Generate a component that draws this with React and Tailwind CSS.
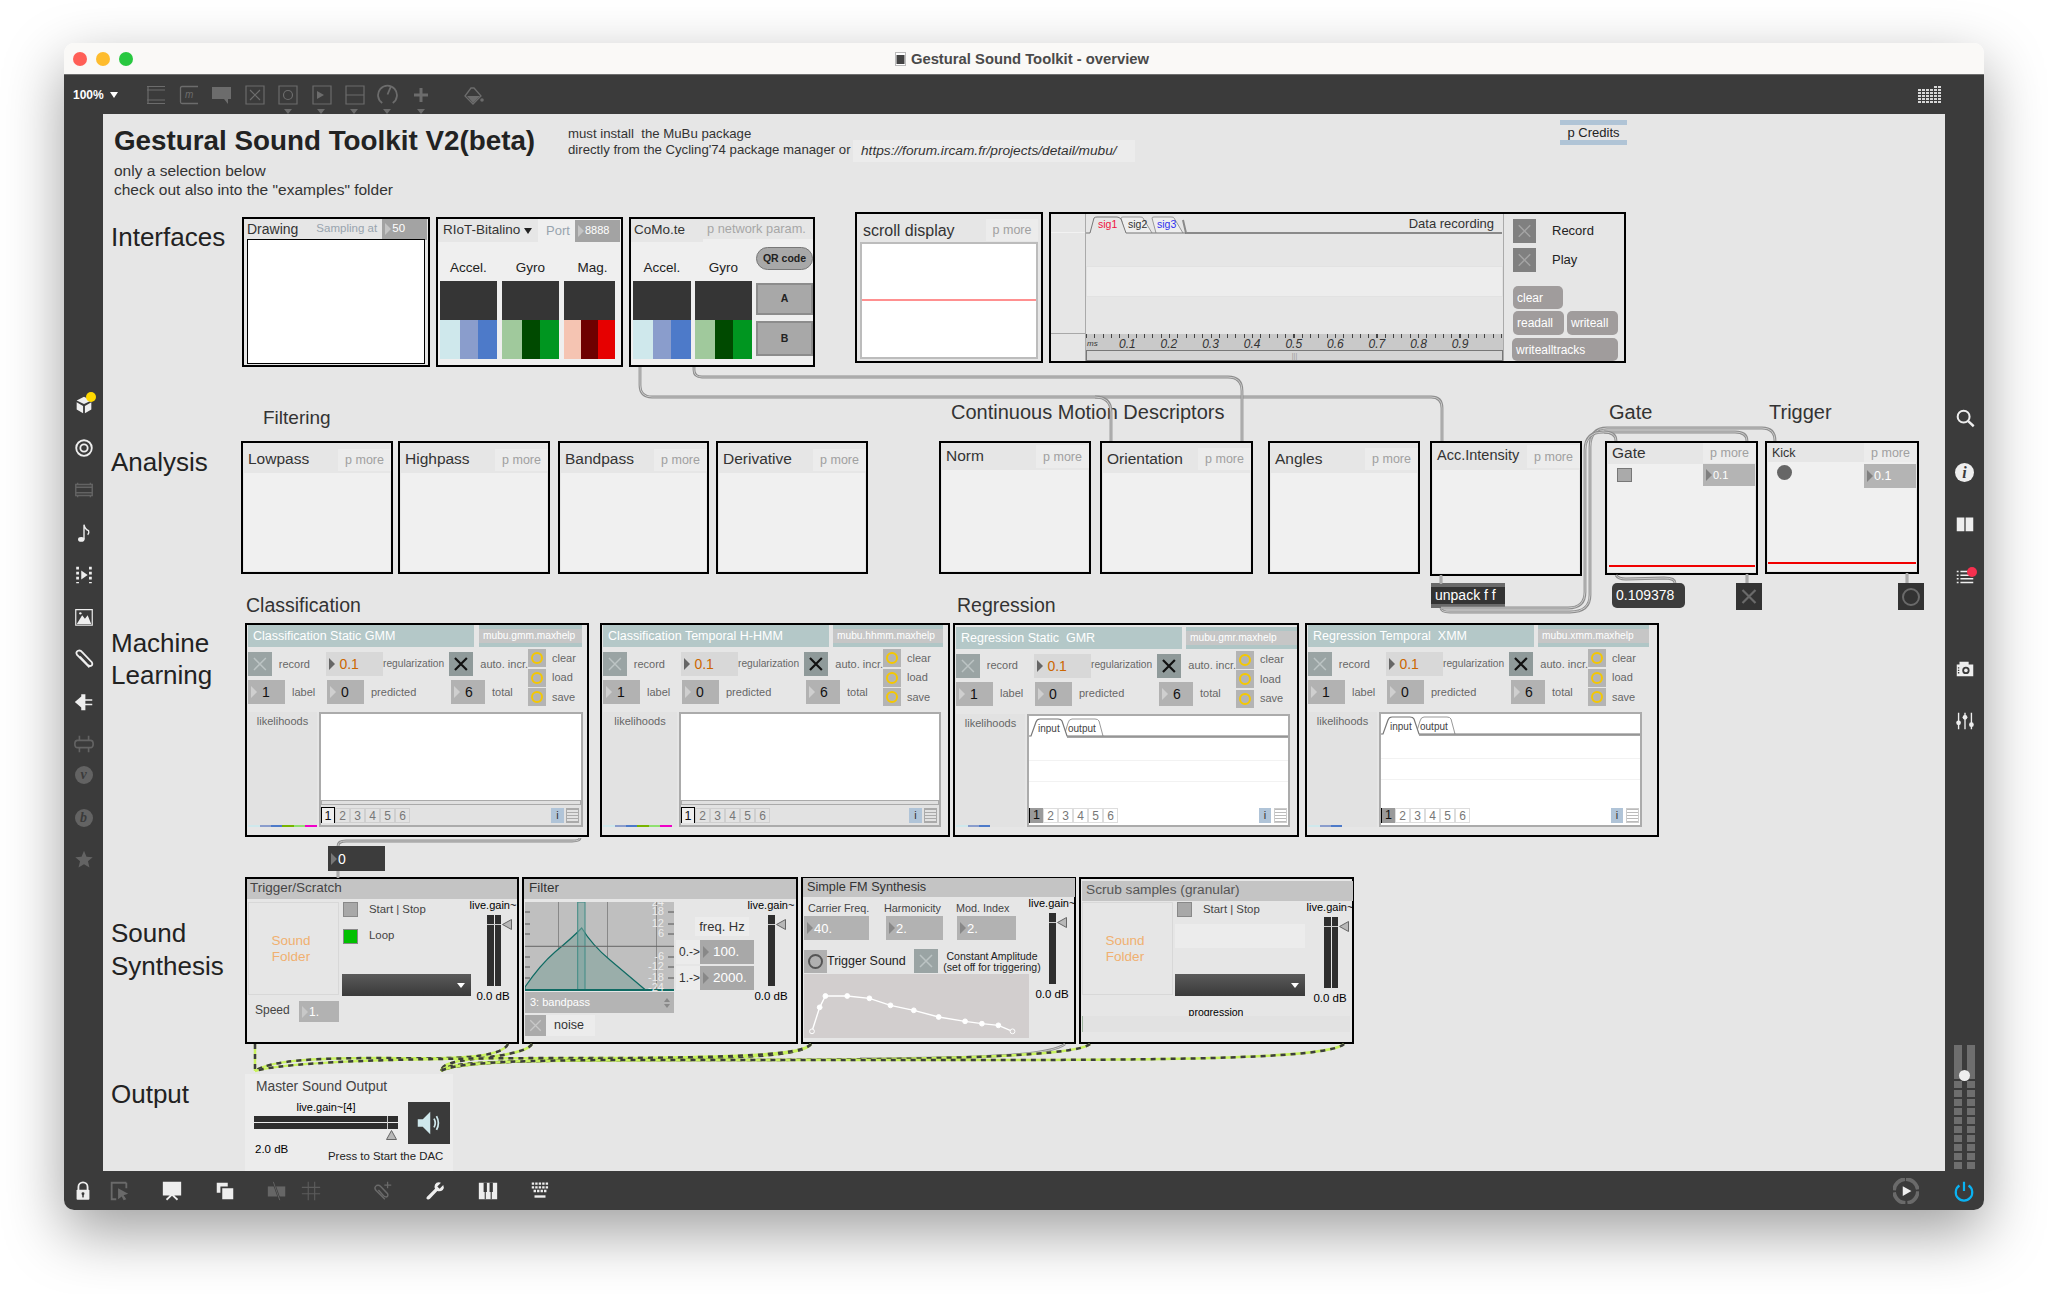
import React from "react";

const Svg = ({ size = 22, className = "", children, box = "0 0 24 24" }) => (
  <svg width={size} height={size} viewBox={box} className={className}>
    {children}
  </svg>
);

// patch objects sit on the free canvas, coordinates are screen pixels
const Node = ({ x, y, w, h, className = "", children }) => (
  <div
    className={"absolute " + className}
    style={{ left: x - 103, top: y - 114, width: w, height: h }}
  >
    {children}
  </div>
);

const Label = ({ x, y, className = "", children }) => (
  <div
    className={"absolute whitespace-nowrap leading-none -translate-y-1/2 " + className}
    style={{ left: x - 103, top: y - 114 }}
  >
    {children}
  </div>
);

const Centered = ({ x, y, className = "", children }) => (
  <div
    className={"absolute whitespace-nowrap leading-none -translate-x-1/2 -translate-y-1/2 " + className}
    style={{ left: x - 103, top: y - 114 }}
  >
    {children}
  </div>
);

const Tri = ({ className = "border-l-[#8a8a8a]" }) => (
  <span className={"shrink-0 border-y-[6px] border-l-[6px] border-y-transparent " + className} />
);

const NumBox = ({ value, className = "", bg = "bg-[#b2b2b2]", text = "text-white", tri, size = "text-[13px]" }) => (
  <div className={"flex items-center pl-[3px] gap-[1px] " + bg + " " + className}>
    <Tri className={tri} />
    <span className={"leading-none " + text + " " + size}>{value}</span>
  </div>
);

const XBox = ({ className = "", bg = "bg-[#9aa4a4]", stroke = "#bcc4c4", sw = 1.5 }) => (
  <div className={"flex items-center justify-center " + bg + " " + className}>
    <svg viewBox="0 0 24 24" className="w-full h-full">
      <path d="M6 6L18 18M18 6L6 18" stroke={stroke} strokeWidth={sw} fill="none" />
    </svg>
  </div>
);

const PMore = ({ className = "" }) => (
  <div className={"absolute flex items-center justify-center bg-[#ececec] text-[#a0a0a0] text-[12.5px] " + className}>
    p more
  </div>
);

const Panel = ({ className = "", ...rest }) => (
  <Node className={"border-2 border-black " + className} {...rest} />
);

/* ---------- chrome ---------- */

const TitleBar = () => (
  <div className="h-[32px] shrink-0 bg-[#faf9f7] border-b border-[#6e6e6e] grid grid-cols-[1fr_auto_1fr] items-center">
    <div className="flex items-center gap-[9px] pl-[9px]">
      <span className="w-[14px] h-[14px] rounded-full bg-[#ff5f57]" />
      <span className="w-[14px] h-[14px] rounded-full bg-[#febc2e]" />
      <span className="w-[14px] h-[14px] rounded-full bg-[#28c840]" />
    </div>
    <div className="flex items-center gap-[5px] pr-[4px] pt-[2px]">
      <svg width="11" height="14" viewBox="0 0 11 14">
        <rect x="0.5" y="0.5" width="10" height="13" fill="#fff" stroke="#bbb" />
        <rect x="1.5" y="3" width="8" height="9" fill="#444" />
      </svg>
      <span className="text-[14.8px] font-bold text-[#4a4a4a] leading-none">Gestural Sound Toolkit - overview</span>
    </div>
    <div />
  </div>
);

const ToolSlot = ({ children, arrow }) => (
  <div className="relative w-[33.2px] h-[24px] flex items-center justify-center text-[#6c6c6c]">
    {children}
    {arrow && (
      <span className="absolute top-[26px] left-[12px] border-x-[4px] border-t-[5px] border-x-transparent border-t-[#6c6c6c]" />
    )}
  </div>
);

const TopToolbar = () => (
  <div className="h-[39px] shrink-0 bg-[#3b3b3b] flex items-center pl-[9px]">
    <div className="w-[66px] flex items-center gap-[6px] text-white text-[12px] font-bold">
      100%
      <span className="border-x-[4px] border-t-[6px] border-x-transparent border-t-white" />
    </div>
    <ToolSlot>
      <Svg size={20} box="0 0 20 20">
        <path d="M1 1.5H19M1 5H19M1 15H19M1 18.5H19M2 1V19" stroke="currentColor" strokeWidth="1.2" fill="none" />
      </Svg>
    </ToolSlot>
    <ToolSlot>
      <Svg size={20} box="0 0 20 20">
        <path d="M19 1.5H3Q1.5 1.5 1.5 3V17Q1.5 18.5 3 18.5H19" stroke="currentColor" strokeWidth="1.3" fill="none" />
        <text x="6" y="13" fontSize="10" fontStyle="italic" fill="currentColor">m</text>
      </Svg>
    </ToolSlot>
    <ToolSlot>
      <Svg size={20} box="0 0 20 20">
        <path d="M0 2H19V14H16V19L12 14H0Z" fill="currentColor" />
      </Svg>
    </ToolSlot>
    <ToolSlot>
      <Svg size={20} box="0 0 20 20">
        <path d="M1 1H19V19H1ZM5 5L15 15M15 5L5 15" stroke="currentColor" strokeWidth="1.2" fill="none" />
      </Svg>
    </ToolSlot>
    <ToolSlot arrow>
      <Svg size={20} box="0 0 20 20">
        <path d="M1 1H19V19H1Z" stroke="currentColor" strokeWidth="1.2" fill="none" />
        <circle cx="10" cy="10" r="4.5" stroke="currentColor" strokeWidth="1.2" fill="none" />
      </Svg>
    </ToolSlot>
    <ToolSlot arrow>
      <Svg size={20} box="0 0 20 20">
        <path d="M1 1H19V19H1Z" stroke="currentColor" strokeWidth="1.2" fill="none" />
        <path d="M5 6L12 10L5 14Z" fill="currentColor" />
      </Svg>
    </ToolSlot>
    <ToolSlot arrow>
      <Svg size={20} box="0 0 20 20">
        <path d="M1 1H19V19H1ZM1 10H19" stroke="currentColor" strokeWidth="1.2" fill="none" />
      </Svg>
    </ToolSlot>
    <ToolSlot arrow>
      <Svg size={21} box="0 0 20 20">
        <path d="M5 18A9 9 0 1 1 15 18M10 10L13 3" stroke="currentColor" strokeWidth="1.7" fill="none" />
      </Svg>
    </ToolSlot>
    <ToolSlot arrow>
      <Svg size={16} box="0 0 16 16">
        <path d="M8 1V15M1 8H15" stroke="currentColor" strokeWidth="3" fill="none" />
      </Svg>
    </ToolSlot>
    <div className="w-[20px]" />
    <ToolSlot>
      <Svg size={20} box="0 0 20 20">
        <path d="M7 3L1 11L9 19L17 11L10 3Z" fill="none" stroke="currentColor" strokeWidth="1.3" />
        <path d="M3 11H16L9 18Z" fill="currentColor" />
        <circle cx="18" cy="15" r="1.8" fill="currentColor" />
      </Svg>
    </ToolSlot>
    <div className="ml-auto mr-[43px] grid grid-cols-6 gap-[1px]">
      {Array.from({ length: 36 }).map((_, i) => (
        <span key={i} className={"w-[3px] h-[2px] " + (i < 4 ? "bg-transparent" : "bg-[#d8d8d8]")} />
      ))}
    </div>
  </div>
);

const LeftSidebar = () => (
  <div className="w-[39px] shrink-0 bg-[#3b3b3b] flex flex-col items-center">
    <div className="relative mt-[280px] h-[24px] text-[#eeeeee]">
      <Svg>
        <path d="M12 3L20 7L12 11L4 7ZM4 9L11 13V21L4 17ZM20 9L13 13V21L20 17Z" fill="currentColor" />
      </Svg>
      <span className="absolute -top-[2px] left-[13px] w-[10px] h-[10px] rounded-full bg-[#ffd900]" />
    </div>
    <div className="mt-[19px] h-[24px] text-[#eeeeee]">
      <Svg>
        <circle cx="12" cy="12" r="8.5" stroke="currentColor" strokeWidth="2" fill="none" />
        <circle cx="12" cy="12" r="4" stroke="currentColor" strokeWidth="2" fill="none" />
      </Svg>
    </div>
    <div className="mt-[18px] h-[24px] text-[#636363]">
      <Svg>
        <path d="M3 6H21V18H3ZM5 4V6M19 4V6M5 18V20M19 18V20M3 9H21M3 15H21" stroke="currentColor" strokeWidth="1.6" fill="none" />
      </Svg>
    </div>
    <div className="mt-[19px] h-[24px] text-[#eeeeee]">
      <Svg>
        <ellipse cx="9" cy="19" rx="3.5" ry="2.6" fill="currentColor" />
        <path d="M12 19V3Q13 8 17 9.5Q18 12 16 14" stroke="currentColor" strokeWidth="1.5" fill="none" />
      </Svg>
    </div>
    <div className="mt-[18px] h-[24px] text-[#eeeeee]">
      <Svg>
        <path d="M5 3V21M19 3V21" stroke="currentColor" strokeWidth="3" strokeDasharray="3 2.5" fill="none" />
        <path d="M9 7L16 12L9 17Z" fill="currentColor" />
      </Svg>
    </div>
    <div className="mt-[18px] h-[24px] text-[#eeeeee]">
      <Svg>
        <path d="M3 4H21V21H3Z" stroke="currentColor" strokeWidth="1.3" fill="none" />
        <path d="M4 20L10 10L13 14L16 10L20 20Z" fill="currentColor" />
        <circle cx="8" cy="8" r="1.3" fill="currentColor" />
      </Svg>
    </div>
    <div className="mt-[18px] h-[24px] text-[#eeeeee]">
      <Svg>
        <path d="M18 21L4.5 7.5Q2.5 4.5 5.5 3Q8 2 10 4.5L20.5 15.5Q22 18.5 19.5 19.5Q17.5 20 15.5 18L7.5 9.5" stroke="currentColor" strokeWidth="2" fill="none" />
      </Svg>
    </div>
    <div className="mt-[19px] h-[24px] text-[#eeeeee]">
      <Svg>
        <path d="M2 12L9 6V3.5H13.5V9H21V10.5H13.5V14H21V15.5H13.5V21H9V18Z" fill="currentColor" />
      </Svg>
    </div>
    <div className="mt-[18px] h-[24px] text-[#636363]">
      <Svg>
        <path d="M5 8H19Q22 8 22 12Q22 16 19 16H5Q2 16 2 12Q2 8 5 8ZM7 3V8M17 3V8M7 16V21M17 16V21" stroke="currentColor" strokeWidth="1.8" fill="none" />
      </Svg>
    </div>
    <div className="mt-[9px] w-[18px] h-[18px] mb-[3px] rounded-full bg-[#636363] flex items-center justify-center text-[#3b3b3b] text-[14px] italic font-['Liberation_Serif',serif] font-bold leading-none">
      v
    </div>
    <div className="mt-[22px] w-[18px] h-[18px] rounded-full bg-[#636363] flex items-center justify-center text-[#3b3b3b] text-[14px] italic font-['Liberation_Serif',serif] font-bold leading-none">
      b
    </div>
    <div className="mt-[21px] h-[24px] text-[#636363]">
      <Svg>
        <path d="M12 3L14.7 9.5L21.5 10L16.3 14.5L18 21.3L12 17.6L6 21.3L7.7 14.5L2.5 10L9.3 9.5Z" fill="currentColor" />
      </Svg>
    </div>
  </div>
);

const RightSidebar = () => (
  <div className="w-[39px] shrink-0 bg-[#3b3b3b] flex flex-col items-center text-[#eeeeee]">
    <div className="mt-[293px] h-[24px]">
      <Svg>
        <circle cx="10.5" cy="10.5" r="6.5" stroke="currentColor" strokeWidth="2.2" fill="none" />
        <path d="M15.5 15.5L21.5 21" stroke="currentColor" strokeWidth="2.6" fill="none" />
      </Svg>
    </div>
    <div className="mt-[32px] w-[19px] h-[19px] mb-[5px] rounded-full bg-[#eeeeee] flex items-center justify-center text-[#3b3b3b] text-[16px] italic font-bold font-['Liberation_Serif',serif] leading-none">
      i
    </div>
    <div className="mt-[26px] h-[24px]">
      <Svg>
        <path d="M3 5H11.3V20H3ZM12.7 5H21V20H12.7Z" fill="currentColor" />
      </Svg>
    </div>
    <div className="relative mt-[29px] h-[24px]">
      <Svg>
        <path d="M7 6H16M7 10H21M7 14H21M7 18H21M3 6H5M3 10H5M3 14H5M3 18H5" stroke="currentColor" strokeWidth="1.6" fill="none" />
      </Svg>
      <span className="absolute top-[1px] left-[13px] w-[10px] h-[10px] rounded-full bg-[#f5304f]" />
    </div>
    <div className="mt-[68px] h-[24px]">
      <Svg>
        <path d="M3 7H6V4H16V7H21V20H3Z" fill="currentColor" />
        <circle cx="13" cy="13.5" r="4" fill="#3b3b3b" />
        <circle cx="13" cy="13.5" r="2" fill="#eeeeee" />
        <path d="M5 10V18" stroke="#3b3b3b" strokeWidth="1.5" strokeDasharray="1.5 1.2" />
      </Svg>
    </div>
    <div className="mt-[28px] h-[24px]">
      <Svg>
        <path d="M5 3V21M12 3V21M19 3V21" stroke="currentColor" strokeWidth="1.5" />
        <circle cx="5" cy="14" r="2.6" fill="currentColor" />
        <circle cx="12" cy="8" r="2.6" fill="currentColor" />
        <circle cx="19" cy="16" r="2.6" fill="currentColor" />
      </Svg>
    </div>
    <div className="relative mt-auto mb-[2px] flex gap-[5px] h-[124px]">
      <div className="w-[8px] flex flex-col">
        <div className="h-[27px] bg-[#6e6e6e]" />
        <div className="flex-1 bg-[repeating-linear-gradient(to_bottom,#6e6e6e_0,#6e6e6e_7px,#3b3b3b_7px,#3b3b3b_9px)]" />
      </div>
      <div className="w-[8px] flex flex-col">
        <div className="h-[27px] bg-[#6e6e6e]" />
        <div className="flex-1 bg-[repeating-linear-gradient(to_bottom,#6e6e6e_0,#6e6e6e_7px,#3b3b3b_7px,#3b3b3b_9px)]" />
      </div>
      <span className="absolute top-[25px] left-[5px] w-[11px] h-[11px] rounded-full bg-[#eeeeee]" />
    </div>
  </div>
);

const BottomToolbar = () => (
  <div className="h-[39px] shrink-0 bg-[#3b3b3b] flex items-center text-[#eeeeee]">
    <div className="ml-[8px]">
      <Svg>
        <path d="M7 11V7.5A5 5 0 0 1 17 7.5V11" stroke="currentColor" strokeWidth="2" fill="none" />
        <rect x="5" y="10.5" width="14" height="11" rx="1" fill="currentColor" />
        <circle cx="12" cy="15" r="1.6" fill="#3b3b3b" />
        <rect x="11.2" y="15" width="1.6" height="4" fill="#3b3b3b" />
      </Svg>
    </div>
    <div className="ml-[14px] text-[#6a6a6a]">
      <Svg>
        <path d="M20 3H4V21H9M20 3V9" stroke="currentColor" strokeWidth="2" fill="none" />
        <path d="M11 9L22 15L17 16.5L20 21L17 22L15 18L11 21Z" fill="currentColor" />
      </Svg>
    </div>
    <div className="ml-[31px]">
      <Svg>
        <path d="M3 3H21V16H3ZM12 16L6 21.5M12 16L18 21.5" stroke="currentColor" strokeWidth="2" fill="currentColor" />
      </Svg>
    </div>
    <div className="ml-[31px]">
      <Svg>
        <path d="M3 3H15V7H7V14H3ZM9 9H21V21H9Z" fill="currentColor" />
      </Svg>
    </div>
    <div className="ml-[30px] text-[#666666]">
      <Svg>
        <path d="M2 7H21V18H2Z" fill="currentColor" />
        <path d="M8 2L15 22" stroke="#3b3b3b" strokeWidth="2.4" />
        <path d="M8 2L15 22" stroke="currentColor" strokeWidth="1" />
      </Svg>
    </div>
    <div className="ml-[12px] text-[#5c5c5c]">
      <Svg>
        <path d="M9 2V22M16 2V22M2 8H22M2 15H22" stroke="currentColor" strokeWidth="1.2" fill="none" />
      </Svg>
    </div>
    <div className="ml-[50px] text-[#6a6a6a]">
      <Svg>
        <path d="M14 21L4 11Q2 8 5 6Q7.5 5 9.5 7L17 15Q18 18 15.5 18.5Q13.5 18.5 12 16.5L7 11" stroke="currentColor" strokeWidth="1.6" fill="none" />
        <path d="M17 2V9M13.5 5.5H21" stroke="currentColor" strokeWidth="1.4" />
      </Svg>
    </div>
    <div className="ml-[30px]">
      <Svg>
        <path d="M21 5.5L17 9.5L14.5 7L18.5 3Q14 1.5 12 5Q11 7.5 12 9.5L3 18.5Q2 20.5 3.5 21Q5 22 6.5 20.5L14.5 12Q18 13 20.5 11Q22.5 8.5 21 5.5Z" fill="currentColor" />
      </Svg>
    </div>
    <div className="ml-[30.5px]">
      <Svg>
        <path d="M2 3H22V21H2Z" fill="currentColor" />
        <path d="M9 3V21M15.5 3V21" stroke="#3b3b3b" strokeWidth="1.2" />
        <path d="M7.2 3V13H10.8V3M13.7 3V13H17.3V3" fill="#3b3b3b" />
      </Svg>
    </div>
    <div className="ml-[30.5px]">
      <Svg>
        <path d="M3 4H21M3 8H21M5 12H19" stroke="currentColor" strokeWidth="2.6" strokeDasharray="2.6 1.2" fill="none" />
        <path d="M6 18H18" stroke="currentColor" strokeWidth="2.6" />
      </Svg>
    </div>
    <div className="ml-auto text-[#6a6a6a]">
      <Svg size={26}>
        <path d="M12 1A11 11 0 1 1 11.9 1" stroke="currentColor" strokeWidth="3.4" fill="none" strokeDasharray="15.5 1.8" />
        <path d="M9 7.5L17 12L9 16.5Z" fill="#eeeeee" />
      </Svg>
    </div>
    <div className="ml-[34px] mr-[9px] text-[#0ab2f2]">
      <Svg>
        <path d="M7 6A9 9 0 1 0 17 6M12 2V12" stroke="currentColor" strokeWidth="2.4" fill="none" />
      </Svg>
    </div>
  </div>
);

/* ---------- patch cords ---------- */

const Cord = ({ d }) => (
  <>
    <path d={d} fill="none" stroke="#8e8e8e" strokeWidth="2.8" />
    <path d={d} fill="none" stroke="#c9c9c9" strokeWidth="1" />
  </>
);

const Signal = ({ d }) => (
  <>
    <path d={d} fill="none" stroke="#c9f25f" strokeWidth="2.5" />
    <path d={d} fill="none" stroke="#3d3d3d" strokeWidth="2.5" strokeDasharray="5 5" />
  </>
);

const Cords = () => (
  <svg
    className="absolute left-0 top-0 z-20 pointer-events-none"
    width="1842"
    height="1057"
    viewBox="103 114 1842 1057"
  >
    <Cord d="M640 367L640 385Q640 397 652 397L1431 397Q1442 397 1442 408L1442 441" />
    <Cord d="M1095 397Q1111 397 1111 412L1111 441" />
    <Cord d="M694 367L694 370Q694 377 702 377L1228 377Q1242 377 1242 391L1242 441" />
    <Cord d="M1441 575L1441 584" />
    <Cord d="M1441 608Q1441 612 1450 612L1570 612Q1590 612 1590 595L1590 447Q1590 428 1607 428L1762 428Q1775 428 1775 441" />
    <Cord d="M1441 608L1568 608Q1585 608 1585 592L1585 450Q1585 432 1603 432L1735 432Q1747 432 1747 441" />
    <Cord d="M1604 432Q1616 432 1616 441" />
    <Cord d="M1616 575Q1618 579 1626 579L1664 578Q1675 578 1675 583" />
    <Cord d="M1747 574L1747 583" />
    <Cord d="M1907 573L1907 583" />
    <Cord d="M580 838Q580 841 572 841L346 841Q338 841 338 846" />
    <Cord d="M338 871L338 878" />
    <Cord d="M1065 1044C1050 1056 980 1058 860 1059" />
    <Signal d="M255 1044L255 1071" />
    <Signal d="M508 1044C500 1062 420 1058 380 1058C320 1058 270 1060 255 1071" />
    <Signal d="M532 1044C525 1056 470 1058 455 1062C447 1064 442 1066 441 1071" />
    <Signal d="M811 1044C800 1060 700 1058 600 1058C500 1058 300 1058 255 1071" />
    <Signal d="M811 1044C800 1060 660 1056 560 1060C500 1062 445 1062 441 1071" />
    <Signal d="M1090 1044C1075 1058 900 1060 720 1060C560 1060 460 1060 441 1071" />
    <Signal d="M1344 1044C1325 1062 1100 1060 800 1060C600 1060 460 1058 441 1071" />
  </svg>
);

/* ---------- interfaces ---------- */

const ACCEL = ["bg-[#cfe8ec] w-[20px]", "bg-[#8a9dcc] w-[18px]", "bg-[#4d7ac9] flex-1"];
const GYRO = ["bg-[#a0c99c] w-[20px]", "bg-[#004a00] w-[18px]", "bg-[#009620] flex-1"];
const MAG = ["bg-[#f5c4b2] w-[17px]", "bg-[#6e0000] w-[17px]", "bg-[#e60000] flex-1"];

const Sensor = ({ label, stripes, className = "", labelPad = "" }) => (
  <div className={"flex flex-col " + className}>
    <div className={"h-[39px] pt-[14px] flex items-center justify-center text-[13.5px] text-[#222] " + labelPad}>{label}</div>
    <div className="h-[39px] bg-[#353535]" />
    <div className="h-[39px] flex">
      {stripes.map((s) => (
        <div key={s} className={s} />
      ))}
    </div>
  </div>
);

const Interfaces = () => (
  <>
    <Panel x={242} y={217} w={188} h={150} className="flex flex-col">
      <div className="h-[20px] flex items-center pl-[3px] text-[14px] text-[#333]">
        Drawing
        <span className="ml-[18px] text-[11.5px] text-[#98a4ae] w-[66px]">Sampling at</span>
        <NumBox value="50" className="w-[45px] h-[21px]" bg="bg-[#a3a3a3]" tri="border-l-[#c4c4c4]" size="text-[11.5px]" />
      </div>
      <div className="mx-[3px] mb-[1px] flex-1 bg-white border border-black" />
    </Panel>

    <Panel x={436} y={217} w={187} h={150} className="bg-[#efefef] flex flex-col">
      <div className="h-[23px] flex items-center">
        <div className="w-[100px] h-full bg-[#e6e6e6] flex items-center gap-[4px] pl-[5px] text-[13.5px] text-[#333]">
          RIoT-Bitalino
          <span className="border-x-[4px] border-t-[6px] border-x-transparent border-t-[#222]" />
        </div>
        <span className="ml-[8px] w-[29px] text-[13px] text-[#98a4ae]">Port</span>
        <NumBox value="8888" className="w-[45px] h-[22px]" bg="bg-[#a3a3a3]" tri="border-l-[#c4c4c4]" size="text-[11px]" />
      </div>
      <div className="flex gap-[5px] pl-[2px]">
        <Sensor label="Accel." stripes={ACCEL} className="w-[57px]" />
        <Sensor label="Gyro" stripes={GYRO} className="w-[57px]" />
        <Sensor label="Mag." stripes={MAG} className="w-[51px]" labelPad="pl-[6px]" />
      </div>
    </Panel>

    <Panel x={629} y={217} w={186} h={150} className="bg-[#efefef] flex flex-col">
      <div className="h-[23px] flex items-start">
        <div className="w-[72px] h-full bg-[#e6e6e6] flex items-center pl-[3px] text-[13.5px] text-[#333]">CoMo.te</div>
        <div className="flex-1 h-[20px] bg-[#e6e6e6] flex items-center pl-[4px] text-[12.8px] whitespace-nowrap text-[#a6a6a6]">p network param.</div>
      </div>
      <div className="flex pl-[2px] gap-[4px]">
        <div className="flex gap-[4px]">
          <Sensor label="Accel." stripes={ACCEL} className="w-[58px]" />
          <Sensor label="Gyro" stripes={GYRO} className="w-[57px]" />
        </div>
        <div className="w-[57px] flex flex-col mt-[5px]">
          <div className="h-[23px] rounded-full bg-[#a8a8a8] border border-[#777] flex items-center justify-center text-[10.5px] font-bold text-[#222]">QR code</div>
          <div className="mt-[13px] h-[32px] bg-[#a8a8a8] border-2 border-[#8c8c8c] flex items-center justify-center text-[10.5px] font-bold text-[#222]">A</div>
          <div className="mt-[6px] h-[35px] bg-[#a8a8a8] border-2 border-[#8c8c8c] flex items-center justify-center text-[10.5px] font-bold text-[#222]">B</div>
        </div>
      </div>
    </Panel>

    <Panel x={855} y={212} w={188} h={151} className="flex flex-col">
      <div className="relative h-[28px] flex items-center pl-[6px] pt-[5px] text-[16px] text-[#333]">
        scroll display
        <PMore className="top-[5px] right-[3px] w-[52px] h-[22px]" />
      </div>
      <div className="relative mx-[3px] mb-[2px] flex-1 bg-white border-2 border-[#bcbcbc]">
        <div className="absolute left-0 right-0 top-[55px] h-[2px] bg-[#ff9090]" />
      </div>
    </Panel>

    <Panel x={1049} y={212} w={577} h={151} className="flex">
      <div className="w-[35px] shrink-0 flex flex-col border-r border-[#aaaaaa]">
        <div className="h-[19px] border-b border-[#f2f2f2]" />
        <div className="flex-1 border-b border-[#a8a8a8]" />
        <div className="h-[27px]" />
      </div>
      <div className="relative w-[418px] shrink-0 flex flex-col border-r border-[#aaaaaa]">
        <svg width="418" height="21" className="shrink-0 text-[#222]" viewBox="0 0 418 21">
          <path d="M97 6L100 19H416" fill="none" stroke="#8a8a8a" strokeWidth="2" />
          <path d="M70 19L66 4Q66 3 68 3H85Q88 3 88 4L97 19" fill="#eeeeee" stroke="#999" />
          <path d="M39 19L35 4Q35 3 37 3H54Q57 3 57 4L66 19" fill="#eeeeee" stroke="#999" />
          <path d="M0 19H4L8 4Q9 3 11 3H31Q33 3 35 5L40 19H100" fill="#e6e6e6" stroke="#777" />
          <text x="12" y="14" fontSize="10.5" fill="#f01040">sig1</text>
          <text x="42" y="14" fontSize="10.5" fill="#333">sig2</text>
          <text x="71" y="14" fontSize="10.5" fill="#3030f0">sig3</text>
          <text x="408" y="14" fontSize="13" textAnchor="end" fill="#333">Data recording</text>
        </svg>
        <div className="mt-[31px] h-[31px] bg-[#ededed] border border-[#e2e2e2]" />
        <div className="mt-auto h-[27px] bg-[#c9c9c9] flex flex-col">
          <div className="h-[4px] bg-[repeating-linear-gradient(to_right,#444_0,#444_1px,transparent_1px,transparent_8.3px)]" />
          <div className="h-[12px] flex items-center text-[12px] italic text-[#333] leading-none">
            <span className="w-[33px] pl-[1px] text-[8px]">ms</span>
            <div className="flex gap-[24px]">
              {["0.1", "0.2", "0.3", "0.4", "0.5", "0.6", "0.7", "0.8", "0.9"].map((n) => (
                <span key={n} className="w-[17.6px]">{n}</span>
              ))}
            </div>
          </div>
          <div className="flex-1 mx-0 bg-[#d4d4d4] border border-[#777] flex items-center justify-center text-[#999] text-[7px] leading-none">|||</div>
        </div>
      </div>
      <div className="flex-1 pl-[9px] flex flex-col">
        <div className="mt-[5px] flex items-center">
          <XBox className="w-[23px] h-[24px]" bg="bg-[#808080]" stroke="#a4a4a4" />
          <span className="ml-[16px] text-[13px] text-[#222]">Record</span>
        </div>
        <div className="mt-[5px] flex items-center">
          <XBox className="w-[23px] h-[24px]" bg="bg-[#808080]" stroke="#a4a4a4" />
          <span className="ml-[16px] text-[13px] text-[#222]">Play</span>
        </div>
        <button className="mt-[14px] w-[50px] h-[24px] rounded-[5px] bg-[#a09c9c] text-white text-[12px] text-left pl-[4px]">clear</button>
        <div className="mt-[2px] flex gap-[3px]">
          <button className="w-[51px] h-[24px] rounded-[5px] bg-[#a09c9c] text-white text-[12px] text-left pl-[4px]">readall</button>
          <button className="w-[51px] h-[24px] rounded-[5px] bg-[#a09c9c] text-white text-[12px] text-left pl-[4px]">writeall</button>
        </div>
        <button className="mt-[3px] -ml-[1px] w-[106px] h-[23px] rounded-[5px] bg-[#a09c9c] text-white text-[12px] text-left pl-[4px]">writealltracks</button>
      </div>
    </Panel>
  </>
);

/* ---------- analysis ---------- */

const Analysis = ({ x, w, y = 441, h = 133, title, textDy = "pt-[7px]", bodyTop = 30, size = "text-[15.5px]", pm = "top-[6px] h-[22px]", children }) => (
  <Panel x={x} y={y} w={w} h={h} className="flex flex-col">
    <div className={"relative shrink-0 flex items-start pl-[5px] leading-[18px] text-[#333] " + size + " " + textDy} style={{ height: bodyTop }}>
      {title}
      <PMore className={"right-[0px] w-[53px] " + pm} />
    </div>
    <div className="relative flex-1 mx-[1px] mb-[1px] bg-[#f0f0f0]">{children}</div>
  </Panel>
);

const AnalysisRow = () => (
  <>
    <Analysis x={241} w={152} title="Lowpass" />
    <Analysis x={398} w={152} title="Highpass" />
    <Analysis x={558} w={151} title="Bandpass" />
    <Analysis x={716} w={152} title="Derivative" />
    <Analysis x={939} w={152} title="Norm" textDy="pt-[4px]" bodyTop={27} pm="top-[2px] h-[23px]" />
    <Analysis x={1100} w={153} title="Orientation" pm="top-[5px] h-[22px]" />
    <Analysis x={1268} w={152} title="Angles" pm="top-[5px] h-[22px]" />
    <Analysis x={1430} w={152} h={135} title="Acc.Intensity" textDy="pt-[3px]" bodyTop={27} size="text-[14.5px]" pm="top-[2px] h-[23px]" />
    <Analysis x={1605} w={153} h={134} title="Gate" textDy="pt-[1px]" bodyTop={21} pm="top-[0px] h-[20px]">
      <div className="absolute left-[9px] top-[4px] w-[15px] h-[14px] bg-[#aaaaaa] border border-[#777]" />
      <NumBox value="0.1" className="absolute right-0 top-0 w-[52px] h-[22px]" bg="bg-[#b4b4b4]" tri="border-l-[#808080]" size="text-[11px]" />
      <div className="absolute left-[1px] right-0 bottom-[5px] h-[2.5px] bg-[#f00000]" />
    </Analysis>
    <Analysis x={1765} w={154} h={133} title="Kick" textDy="pt-[1px]" bodyTop={19} size="text-[12.5px]" pm="top-[0px] h-[19px]">
      <div className="absolute left-[9px] top-[3px] w-[15px] h-[15px] rounded-full bg-[#666666]" />
      <NumBox value="0.1" className="absolute right-0 top-[2px] w-[52px] h-[24px]" bg="bg-[#b4b4b4]" tri="border-l-[#808080]" size="text-[12.5px]" />
      <div className="absolute left-0 right-0 bottom-[7px] h-[2.5px] bg-[#f00000]" />
    </Analysis>
  </>
);

/* ---------- machine learning ---------- */

const Ring = ({ label }) => (
  <div className="flex items-center">
    <div className="w-[18px] h-[18px] bg-[#b4b4b4] flex items-center justify-center">
      <span className="w-[12px] h-[12px] rounded-full border-2 border-[#f5c800]" />
    </div>
    <span className="ml-[6px] text-[11px] text-[#666]">{label}</span>
  </div>
);

const Small = ({ className = "", size = "text-[11px]", children }) => (
  <span className={"text-[#666] leading-none whitespace-nowrap " + size + " " + className}>{children}</span>
);

const NUM_TABS = ["2", "3", "4", "5", "6"];

const ClassGraph = () => (
  <div className="flex-1 border-2 border-[#ababab] bg-white flex flex-col">
    <div className="flex-1" />
    <div className="h-[5px] bg-[#e0e0e0] border border-[#aaa]" />
    <div className="h-[20px] bg-[#e2e2e2] flex items-center">
      <span className="w-[14px] h-[16px] bg-[#efefef] border-t border-r border-l border-black text-[12.5px] text-center leading-[16px] text-[#111]">1</span>
      {NUM_TABS.map((n) => (
        <span key={n} className="w-[15px] h-[15px] border border-[#cfcfcf] text-[12px] text-center leading-[15px] text-[#777]">{n}</span>
      ))}
      <span className="ml-auto w-[13px] h-[15px] bg-[#b0c4d8] text-[11px] text-center leading-[15px] text-[#333]">i</span>
      <span className="ml-[2px] mr-[2px] w-[13px] h-[15px] border border-[#aaa] bg-[repeating-linear-gradient(to_bottom,#aaa_0,#aaa_1px,transparent_1px,transparent_3px)]" />
    </div>
  </div>
);

const RegGraph = () => (
  <div className="flex-1 border-2 border-[#ababab] bg-white flex flex-col">
    <svg width="100%" height="22" className="shrink-0" viewBox="0 0 260 22" preserveAspectRatio="xMinYMin slice">
      <path d="M35 20L39 7Q40 3 43 3H66Q69 3 70 5L74 20" fill="#fff" stroke="#999" />
      <path d="M0 20H2L7 6Q8 3 11 3H29Q32 3 33 5L38 20H260" fill="#fff" stroke="#777" strokeWidth="1.2" />
      <path d="M38 21H260" stroke="#888" strokeWidth="1.5" />
      <text x="9" y="16" fontSize="10" fill="#444">input</text>
      <text x="39" y="16" fontSize="10" fill="#444">output</text>
    </svg>
    <div className="mt-[22px] h-[22px] border-y border-[#f2f2f2]" />
    <div className="flex-1" />
    <div className="h-[17px] flex items-center bg-white mb-[1px]">
      <span className="w-[14px] h-[15px] bg-[#9a9a9a] border-l border-black text-[12.5px] text-center leading-[15px] text-[#111]">1</span>
      {NUM_TABS.map((n) => (
        <span key={n} className="w-[15px] h-[15px] border border-[#dddddd] text-[12px] text-center leading-[15px] text-[#777]">{n}</span>
      ))}
      <span className="ml-auto w-[12px] h-[15px] bg-[#b0c4d8] text-[11px] text-center leading-[15px] text-[#333]">i</span>
      <span className="ml-[3px] mr-[1px] w-[13px] h-[15px] border border-[#ccc] bg-[repeating-linear-gradient(to_bottom,#bbb_0,#bbb_1px,transparent_1px,transparent_3px)]" />
    </div>
  </div>
);

const MlPanel = ({ x, w, title, help, helpW = 103, gap = "gap-[5px]", graphW = "w-[335px]", sideW = "w-[69px]", top = "pt-[0px]", regression }) => (
  <Panel x={x} y={623} w={w} h={214} className={"flex flex-col pl-[1px] " + top}>
    <div className={"flex h-[22px] shrink-0 " + gap}>
      <div className="w-[226px] bg-[#b4c8c8] text-white text-[12.5px] leading-[22px] pl-[5px] whitespace-nowrap">{title}</div>
      <div
        className="bg-[#c6c6c6] border-y-[4px] border-[#b0c6c6] text-white text-[10.2px] leading-[14px] pl-[4px] whitespace-nowrap"
        style={{ width: helpW }}
      >
        {help}
      </div>
    </div>

    <div className="flex mt-[2px] shrink-0">
      <div className="w-[280px] pt-[3px] flex flex-col gap-[4px]">
        <div className="flex items-center h-[24px]">
          <XBox className="w-[24px] h-[24px]" />
          <Small className="w-[55px] pl-[7px]">record</Small>
          <NumBox value="0.1" className="w-[57px] h-[24px]" bg="bg-[#d8d8d8]" tri="border-l-[#666]" text="text-[#cc6600] ml-[3px]" size="text-[14px]" />
          <Small className="w-[67px]" size="text-[10.2px]">regularization</Small>
          <XBox className="w-[24px] h-[24px]" bg="bg-[#8f9a9a]" stroke="#111" sw={2.2} />
          <Small className="pl-[7px]">auto. incr.</Small>
        </div>
        <div className="flex items-center h-[24px]">
          <NumBox value="1" className="w-[37px] h-[24px]" tri="border-l-[#cfcfcf]" text="text-[#111] ml-[4px]" size="text-[14px]" />
          <Small className="w-[42px] pl-[7px]">label</Small>
          <NumBox value="0" className="w-[37px] h-[24px]" tri="border-l-[#cfcfcf]" text="text-[#111] ml-[4px]" size="text-[14px]" />
          <Small className="w-[87px] pl-[7px]">predicted</Small>
          <NumBox value="6" className="w-[34px] h-[24px]" tri="border-l-[#cfcfcf]" text="text-[#111] ml-[4px]" size="text-[14px]" />
          <Small className="pl-[7px]">total</Small>
        </div>
      </div>
      <div className="flex flex-col gap-[1.5px]">
        <Ring label="clear" />
        <Ring label="load" />
        <Ring label="save" />
      </div>
    </div>

    <div className={"flex gap-[2px] mt-[6px] mb-[8px] flex-1 " + graphW}>
      <div className={"relative shrink-0 bg-[#e2e2e2] text-center pt-[4px] " + sideW}>
        <Small className="block">likelihoods</Small>
        <div className="absolute left-0 right-0 bottom-0 h-[2px] flex">
          <span className="w-[12px] bg-[#cfe8ec]" />
          <span className="w-[11px] bg-[#8a9dcc]" />
          <span className="w-[11px] bg-[#4d7ac9]" />
          {!regression && <span className="w-[12px] bg-[#78b400]" />}
          {!regression && <span className="w-[11px] bg-[#90e070]" />}
          {!regression && <span className="w-[12px] bg-[#f000c8]" />}
        </div>
      </div>
      {regression ? <RegGraph /> : <ClassGraph />}
    </div>
  </Panel>
);

/* ---------- sound synthesis ---------- */

const LiveGain = ({ x, top, double, left }) => (
  <>
    <Centered x={x} y={top - 10} className="text-[11px] text-black">live.gain~</Centered>
    <Node x={left} y={top} w={double ? 14 : 7} h={71} className="flex gap-[1px]">
      <div className="flex-1 bg-[#2e2e2e]" />
      {double && <div className="flex-1 bg-[#2e2e2e]" />}
    </Node>
    <Node x={left} y={top + 9} w={double ? 14 : 7} h={1} className="bg-[#cccccc]" />
    <Node x={left + (double ? 15 : 8)} y={top + 4} w={10} h={11}>
      <svg width="10" height="11" viewBox="0 0 10 11">
        <path d="M0.5 5.5L9.5 0.5V10.5Z" fill="#b8b8b8" stroke="#666" />
      </svg>
    </Node>
    <Centered x={x} y={top + 82} className="text-[11.5px] text-black">0.0 dB</Centered>
  </>
);

const SoundFolder = ({ x, w }) => (
  <Node x={x} y={902} w={w} h={93} className="border border-[#d8d8d8] pr-[5px] flex flex-col items-center justify-center text-[13.5px] leading-[16px] text-[#f0b070]">
    <span>Sound</span>
    <span>Folder</span>
  </Node>
);

const Menu = ({ x, w }) => (
  <Node x={x} y={974} w={w} h={22} className="bg-gradient-to-b from-[#5a5a5a] to-[#3a3a3a] flex items-center justify-end pr-[6px]">
    <span className="border-x-[4px] border-t-[5px] border-x-transparent border-t-white" />
  </Node>
);

const FilterGraph = () => (
  <svg width="149" height="89" viewBox="525 902 149 89" className="block bg-[#bfbfbf]">
    <path d="M558.5 902V990M607.5 902V990M656.5 902V990" stroke="#888" strokeWidth="1" />
    <path d="M525 987Q540 965 555 952Q572 938 581.7 928Q592 945 610 960L645.5 990H525Z" fill="#9aaeaa" stroke="#0f6b63" strokeWidth="1.2" />
    <rect x="577.7" y="902" width="7.3" height="88" fill="#7ea5a1" fillOpacity="0.55" stroke="#3f8a84" />
    <path d="M525 946.3H674" stroke="#666" strokeWidth="1" />
    <path d="M525 990H674" stroke="#0f6b63" strokeWidth="2" />
    {[912, 924, 934, 957, 967, 978].map((y) => (
      <path key={y} d={"M525 " + y + "H530M668 " + y + "H674"} stroke="#555" strokeWidth="1" />
    ))}
    {[
      ["24", 906],
      ["18", 915],
      ["12", 927],
      ["6", 937],
      ["-6", 960],
      ["-12", 970],
      ["-18", 981],
      ["-24", 991],
    ].map(([t, y]) => (
      <text key={t} x="664" y={y} fontSize="11" textAnchor="end" fill="#ececec">{t}</text>
    ))}
  </svg>
);

const ENV = [[58, 484], [78, 412], [93, 378], [150, 378], [208, 385], [263, 406], [324, 421], [389, 441], [458, 454], [502, 461], [545, 466], [582, 484]];

const EnvGraph = () => {
  const pts = ENV.map(([a, b]) => [a / 2.613 - 14.2, (b - 312) / 3]);
  return (
    <svg width="225" height="64" viewBox="0 0 225 64" className="block bg-[#d2cece]">
      <polyline points={pts.map((p) => p.join(",")).join(" ")} fill="none" stroke="#fff" strokeWidth="1.4" />
      {pts.map(([a, b], i) => (
        <circle key={a} cx={a} cy={b} r="2.4" fill={i === 0 || i === pts.length - 1 ? "#d2cece" : "#fff"} stroke="#fff" />
      ))}
    </svg>
  );
};

const Synthesis = () => (
  <>
    <Panel x={245} y={877} w={274} h={167} />
    <Node x={247} y={879} w={270} h={20} className="bg-[#c4c4c4] text-[13.5px] leading-[18px] pl-[3px] text-[#444]">Trigger/Scratch</Node>
    <SoundFolder x={248} w={91} />
    <Node x={343} y={902} w={15} h={15} className="bg-[#a8a8a8] border border-[#888]" />
    <Label x={369} y={910} className="text-[11.4px] text-[#444]">Start | Stop</Label>
    <Node x={343} y={929} w={15} h={15} className="bg-[#00c000] border border-[#888]" />
    <Label x={369} y={936} className="text-[11.4px] text-[#444]">Loop</Label>
    <Menu x={342} w={129} />
    <LiveGain x={493} left={487} top={915} double />
    <Label x={255} y={1010} className="text-[12px] text-[#444]">Speed</Label>
    <Node x={299} y={1001} w={40} h={21}>
      <NumBox value="1." className="w-full h-full" tri="border-l-[#c8c8c8]" size="text-[12px]" />
    </Node>

    <Panel x={522} y={877} w={276} h={167} />
    <Node x={524} y={879} w={272} h={20} className="bg-[#c4c4c4] text-[13.5px] leading-[18px] pl-[5px] text-[#333]">Filter</Node>
    <Node x={525} y={902} w={149} h={89}>
      <FilterGraph />
    </Node>
    <Node x={525} y={992} w={149} h={21} className="bg-[#b4b4b4] flex items-center justify-between pl-[5px] pr-[4px] text-[11px] text-white">
      3: bandpass
      <span className="flex flex-col gap-[2px]">
        <span className="border-x-[3px] border-b-[4px] border-x-transparent border-b-[#888]" />
        <span className="border-x-[3px] border-t-[4px] border-x-transparent border-t-[#888]" />
      </span>
    </Node>
    <Node x={525} y={1015} w={70} h={21} className="bg-[#ececec] flex items-center gap-[8px] text-[12.5px] text-[#333]">
      <XBox className="w-[21px] h-[21px]" bg="bg-[#aaaaaa]" stroke="#c8c8c8" />
      noise
    </Node>
    <Node x={695} y={917} w={54} h={19} className="bg-[#ececec] flex items-center justify-center text-[13px] text-[#333]">freq. Hz</Node>
    <Node x={676} y={940} w={78} h={24} className="flex items-center text-[12px] text-[#333]">
      <span className="w-[24px] h-full bg-[#ececec] flex items-center pl-[3px] whitespace-nowrap">0.-&gt;</span>
      <NumBox value="100." className="flex-1 h-full" bg="bg-[#a8a8a8]" tri="border-l-[#888]" text="text-white ml-[3px]" size="text-[13.5px]" />
    </Node>
    <Node x={676} y={966} w={78} h={24} className="flex items-center text-[12px] text-[#333]">
      <span className="w-[24px] h-full bg-[#ececec] flex items-center pl-[3px] whitespace-nowrap">1.-&gt;</span>
      <NumBox value="2000." className="flex-1 h-full" bg="bg-[#a8a8a8]" tri="border-l-[#888]" text="text-white ml-[3px]" size="text-[13.5px]" />
    </Node>
    <LiveGain x={771} left={768} top={915} />

    <Panel x={801} y={877} w={275} h={167} />
    <Node x={803} y={878} w={272} h={19} className="bg-[#c4c4c4] text-[12.7px] leading-[18px] pl-[4px] text-[#333]">Simple FM Synthesis</Node>
    <Node x={804} y={900} w={212} h={40} className="flex flex-col">
      <div className="flex h-[16px] items-center text-[10.8px] text-[#444] whitespace-nowrap">
        <span className="w-[80px] pl-[4px]">Carrier Freq.</span>
        <span className="w-[72px]">Harmonicity</span>
        <span>Mod. Index</span>
      </div>
      <div className="flex h-[24px]">
        <NumBox value="40." className="w-[65px]" tri="border-l-[#888]" size="text-[13px]" />
        <NumBox value="2." className="ml-[17px] w-[57px]" tri="border-l-[#888]" size="text-[13px]" />
        <NumBox value="2." className="ml-[14px] w-[59px]" tri="border-l-[#888]" size="text-[13px]" />
      </div>
    </Node>
    <Node x={804} y={949} w={224} h={24} className="flex items-center">
      <div className="w-[23px] h-[23px] bg-[#b0b0b0] flex items-center justify-center">
        <span className="w-[15px] h-[15px] rounded-full border-2 border-[#555]" />
      </div>
      <span className="w-[87px] text-[12.5px] text-[#222] leading-none whitespace-nowrap">Trigger Sound</span>
      <XBox className="w-[24px] h-[24px]" />
    </Node>
    <Centered x={992} y={961} className="text-[10.5px] leading-[10.5px] text-center text-[#222]">
      Constant Amplitude
      <br />
      (set off for triggering)
    </Centered>
    <Node x={804} y={974} w={225} h={64}>
      <EnvGraph />
    </Node>
    <LiveGain x={1052} left={1049} top={913} />

    <Panel x={1079} y={877} w={275} h={167} />
    <Node x={1082} y={881} w={271} h={20} className="bg-[#c4c4c4] text-[13.7px] leading-[18px] pl-[4px] text-[#555]">Scrub samples (granular)</Node>
    <SoundFolder x={1082} w={91} />
    <Node x={1177} y={902} w={15} h={15} className="bg-[#a8a8a8] border border-[#888]" />
    <Label x={1203} y={910} className="text-[11.4px] text-[#444]">Start | Stop</Label>
    <Node x={1175} y={924} w={130} h={24} className="bg-[#ececec]" />
    <Menu x={1175} w={130} />
    <LiveGain x={1330} left={1324} top={917} double />
    <Centered x={1216} y={1012} className="text-[10.5px] text-black">progression</Centered>
    <Node x={1082} y={1016} w={268} h={16} className="bg-[#e2e2e2] border-l border-[#9fb59f]" />
  </>
);

const MasterOutput = () => (
  <Node x={245} y={1074} w={208} h={97} className="bg-[#ececec]">
    <div className="pl-[11px] pt-[5px] text-[13.8px] leading-[16px] text-[#444]">Master Sound Output</div>
    <div className="flex">
      <div className="ml-[9px] w-[144px] relative">
        <div className="mt-[7px] text-center text-[11px] leading-[11px] text-black">live.gain~[4]</div>
        <div className="relative mt-[3px] flex flex-col gap-[1px]">
          <div className="h-[6px] bg-[#2e2e2e]" />
          <div className="h-[6px] bg-[#2e2e2e]" />
          <span className="absolute left-[133px] top-0 bottom-0 w-[1px] bg-[#cccccc]" />
        </div>
        <svg width="11" height="10" viewBox="0 0 11 10" className="absolute left-[132px] top-[35px]">
          <path d="M5.5 0.5L10.5 9.5H0.5Z" fill="#b8b8b8" stroke="#666" />
        </svg>
        <div className="mt-[14px] text-[11.5px] leading-[12px] text-black pl-[1px]">2.0 dB</div>
      </div>
      <div className="ml-[10px] mt-[7px] w-[42px] h-[42px] bg-[#3a3a3a] flex items-center justify-center">
        <svg width="30" height="30" viewBox="0 0 24 24">
          <path d="M3 9H7L13 3V21L7 15H3Z" fill="#cfe8ec" />
          <path d="M16 8.5Q18 12 16 15.5M18 6.5Q21 12 18 17.5" stroke="#cfe8ec" strokeWidth="1.4" fill="none" />
        </svg>
      </div>
    </div>
    <div className="absolute left-[83px] bottom-[9px] text-[11.4px] leading-none text-[#222]">Press to Start the DAC</div>
  </Node>
);

const Canvas = () => (
  <div className="relative flex-1 bg-[#e6e6e6] overflow-hidden">
    <Label x={114} y={141} className="text-[27.8px] font-bold text-[#222]">Gestural Sound Toolkit V2(beta)</Label>
    <Label x={114} y={171} className="text-[15.5px] text-[#333]">only a selection below</Label>
    <Label x={114} y={190} className="text-[15.5px] text-[#333]">check out also into the "examples" folder</Label>
    <Label x={568} y={134} className="text-[13.2px] text-[#333]">must install&nbsp; the MuBu package</Label>
    <Label x={568} y={150} className="text-[13.2px] text-[#333]">directly from the Cycling'74 package manager or</Label>
    <Node x={853} y={140} w={282} h={22} className="bg-[#ececec] flex items-center pl-[8px] italic text-[13.7px] text-[#333]">
      https://forum.ircam.fr/projects/detail/mubu/
    </Node>
    <Node x={1560} y={120} w={67} h={25} className="border-y-[5px] border-[#b0c4d6] flex items-center justify-center text-[13px] text-[#222]">
      p Credits
    </Node>

    <Label x={111} y={237} className="text-[26px] text-[#222]">Interfaces</Label>
    <Label x={111} y={462} className="text-[26px] text-[#222]">Analysis</Label>
    <Label x={111} y={643} className="text-[26px] text-[#222]">Machine</Label>
    <Label x={111} y={675} className="text-[26px] text-[#222]">Learning</Label>
    <Label x={111} y={933} className="text-[26px] text-[#222]">Sound</Label>
    <Label x={111} y={966} className="text-[26px] text-[#222]">Synthesis</Label>
    <Label x={111} y={1094} className="text-[26px] text-[#222]">Output</Label>

    <Label x={263} y={417} className="text-[19px] text-[#333]">Filtering</Label>
    <Label x={951} y={412} className="text-[20px] text-[#333]">Continuous Motion Descriptors</Label>
    <Label x={1609} y={412} className="text-[20px] text-[#333]">Gate</Label>
    <Label x={1769} y={412} className="text-[20px] text-[#333]">Trigger</Label>
    <Label x={246} y={606} className="text-[19.5px] text-[#333]">Classification</Label>
    <Label x={957} y={606} className="text-[19.5px] text-[#333]">Regression</Label>

    <Interfaces />
    <AnalysisRow />

    <Node x={1431} y={583} w={74} h={25} className="bg-[#6a6a6a] flex flex-col justify-center">
      <div className="h-[17px] bg-[#333333] text-white text-[14px] leading-[17px] pl-[4px]">unpack f f</div>
    </Node>
    <Node x={1612} y={583} w={73} h={25} className="rounded-[5px] bg-[#3c3c3c] text-white text-[14px] leading-[25px] pl-[4px]">0.109378</Node>
    <Node x={1736} y={583} w={26} h={27}>
      <XBox className="w-full h-full" bg="bg-[#333333]" stroke="#6a6a6a" sw={2} />
    </Node>
    <Node x={1898} y={583} w={26} h={27} className="bg-[#333333] flex items-center justify-center">
      <span className="w-[18px] h-[18px] rounded-full border-2 border-[#6a6a6a]" />
    </Node>

    <MlPanel x={245} w={344} title="Classification Static GMM" help="mubu.gmm.maxhelp" graphW="w-[335px]" />
    <MlPanel x={600} w={350} title="Classification Temporal H-HMM" help="mubu.hhmm.maxhelp" helpW={110} gap="gap-[4px]" graphW="w-[338px]" sideW="w-[74px]" />
    <MlPanel x={953} w={346} title={"Regression Static\u00a0 GMR"} help="mubu.gmr.maxhelp" helpW={111} gap="gap-[4px]" graphW="w-[334px]" top="pt-[1.5px]" regression />
    <MlPanel x={1305} w={354} title={"Regression Temporal\u00a0 XMM"} help="mubu.xmm.maxhelp" helpW={111} gap="gap-[4px]" graphW="w-[334px]" regression />

    <Node x={328} y={846} w={57} h={25}>
      <NumBox value="0" className="w-full h-full" bg="bg-[#3c3c3c]" tri="border-l-[#777]" size="text-[14px]" />
    </Node>

    <Synthesis />
    <MasterOutput />
    <Cords />
  </div>
);

const App = () => (
  <div className="w-[2048px] h-[1294px] overflow-hidden bg-white pl-[64px] pt-[43px] font-['Liberation_Sans',Arial,sans-serif]">
    <div className="w-[1920px] h-[1167px] rounded-[10px] overflow-hidden flex flex-col shadow-[0_22px_60px_rgba(0,0,0,0.38)]">
      <TitleBar />
      <TopToolbar />
      <div className="flex flex-1 min-h-0">
        <LeftSidebar />
        <Canvas />
        <RightSidebar />
      </div>
      <BottomToolbar />
    </div>
  </div>
);

export default App;
